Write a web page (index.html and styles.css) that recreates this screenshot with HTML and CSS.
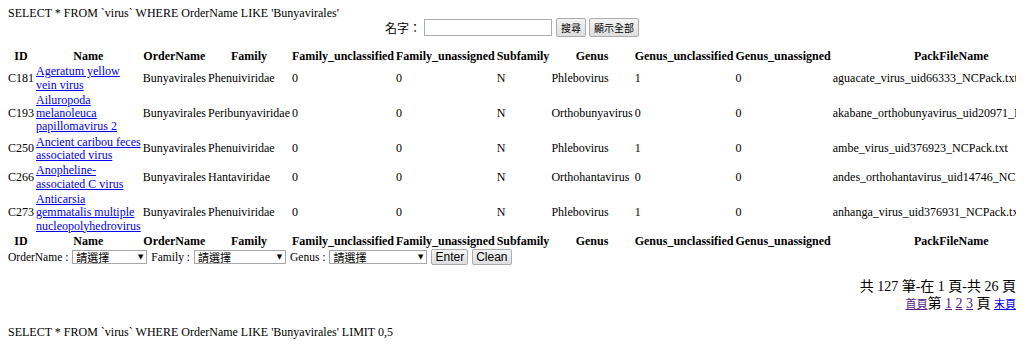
FILE: index.html
```html
<!DOCTYPE html>
<html lang="zh-Hant">
<head>
    <meta charset="UTF-8">
    <meta name="viewport" content="width=device-width, initial-scale=1.0">
    <title>virus</title>
    <link rel="stylesheet" href="styles.css">
</head>
<body>
    <div class="sql">SELECT * FROM `virus` WHERE OrderName LIKE 'Bunyavirales'</div>

    <form class="search">
        <label class="search-label">名字：</label>
        <input type="text" class="search-input">
        <button type="button" class="btn">搜尋</button>
        <button type="button" class="btn">顯示全部</button>
    </form>

    <table class="list">
        <thead>
            <tr>
                <th>ID</th><th>Name</th><th>OrderName</th><th>Family</th><th>Family_unclassified</th><th>Family_unassigned</th><th>Subfamily</th><th>Genus</th><th>Genus_unclassified</th><th>Genus_unassigned</th><th>PackFileName</th>
            </tr>
        </thead>
        <tbody>
            <tr>
                <td>C181</td><td><a href="#">Ageratum yellow vein virus</a></td><td>Bunyavirales</td><td>Phenuiviridae</td><td>0</td><td>0</td><td>N</td><td>Phlebovirus</td><td>1</td><td>0</td><td>aguacate_virus_uid66333_NCPack.txt</td>
            </tr>
            <tr>
                <td>C193</td><td><a href="#">Ailuropoda melanoleuca papillomavirus 2</a></td><td>Bunyavirales</td><td>Peribunyaviridae</td><td>0</td><td>0</td><td>N</td><td>Orthobunyavirus</td><td>0</td><td>0</td><td>akabane_orthobunyavirus_uid20971_NCPack.txt</td>
            </tr>
            <tr>
                <td>C250</td><td><a href="#">Ancient caribou feces associated virus</a></td><td>Bunyavirales</td><td>Phenuiviridae</td><td>0</td><td>0</td><td>N</td><td>Phlebovirus</td><td>1</td><td>0</td><td>ambe_virus_uid376923_NCPack.txt</td>
            </tr>
            <tr>
                <td>C266</td><td><a href="#">Anopheline-associated C virus</a></td><td>Bunyavirales</td><td>Hantaviridae</td><td>0</td><td>0</td><td>N</td><td>Orthohantavirus</td><td>0</td><td>0</td><td>andes_orthohantavirus_uid14746_NCPack.txt</td>
            </tr>
            <tr>
                <td>C273</td><td><a href="#">Anticarsia gemmatalis multiple nucleopolyhedrovirus</a></td><td>Bunyavirales</td><td>Phenuiviridae</td><td>0</td><td>0</td><td>N</td><td>Phlebovirus</td><td>1</td><td>0</td><td>anhanga_virus_uid376931_NCPack.txt</td>
            </tr>
        </tbody>
        <tfoot>
            <tr>
                <th>ID</th><th>Name</th><th>OrderName</th><th>Family</th><th>Family_unclassified</th><th>Family_unassigned</th><th>Subfamily</th><th>Genus</th><th>Genus_unclassified</th><th>Genus_unassigned</th><th>PackFileName</th>
            </tr>
        </tfoot>
    </table>

    <form class="filter">
        <label>OrderName :</label>
        <span class="pick pick-order"><select><option>請選擇</option></select></span>
        <label>Family :</label>
        <span class="pick pick-family"><select><option>請選擇</option></select></span>
        <label>Genus :</label>
        <span class="pick pick-genus"><select><option>請選擇</option></select></span>
        <button type="button" class="btn btn-en">Enter</button>
        <button type="button" class="btn btn-en">Clean</button>
    </form>

    <div class="pager">
        <div class="pager-count">共 127 筆-在 1 頁-共 26 頁</div>
        <div class="pager-links"><a href="#" class="small visited">首頁</a>第 <a href="#" class="visited">1</a> <a href="#" class="visited">2</a> <a href="#" class="visited">3</a> 頁 <a href="#" class="small">末頁</a></div>
    </div>

    <div class="sql sql-limit">SELECT * FROM `virus` WHERE OrderName LIKE 'Bunyavirales' LIMIT 0,5</div>
</body>
</html>
```

FILE: styles.css
```css
* {padding: 0; margin: 0; box-sizing: border-box;}
html {overflow-x: hidden;}
body {margin: 7px 8px 8px; font: 12px/13.3px "Liberation Serif", "Noto Sans CJK TC", serif; color: #000; background: #fff;}
a {color: #0000ee;}
a.visited {color: #551a8b;}

.sql {line-height: 12px;}
.sql-limit {margin-top: 14px; line-height: 13.3px;}

.search {display: flex; justify-content: center; align-items: center; gap: 3px; height: 19px; margin-top: -1px;}
.search-label {font: 12px "Noto Sans CJK TC", sans-serif;}
.search-input {width: 128px; height: 17px; border: 1px solid #abadb3; background: #fff; margin-right: 1px;}

.btn {font: 10px/1 "Noto Sans CJK TC", sans-serif; color: #000; height: 19px; padding: 0 4px; border: 1px solid #acacac; border-radius: 2px; background: linear-gradient(#f3f3f3, #dedede);}
.btn-en {font: 12px/1 "Liberation Sans", sans-serif; height: 16px; padding: 0 3px;}

.list {width: 100%; border-spacing: 0; margin-top: 12px;}
.list th, .list td {padding: 1px; vertical-align: middle;}
.list th:first-child, .list td:first-child {padding-left: 0;}
.list th {font-weight: bold; text-align: center;}
.list td {text-align: left;}

.filter {display: flex; align-items: center; gap: 4px; height: 16px; font-size: 11.5px;}
.pick {position: relative; display: inline-block; height: 14px;}
.pick select {appearance: none; -webkit-appearance: none; width: 100%; height: 14px; border: 1px solid #a6a6a6; background: #fff; font: 11px/12px "Noto Sans CJK TC", sans-serif; color: #000; padding: 0 3px; border-radius: 0;}
.pick::after {content: "\25BC"; position: absolute; right: 4px; top: 3px; font: 7px/8px "DejaVu Sans", sans-serif; color: #000; pointer-events: none;}
.pick-order {width: 75px;}
.pick-family {width: 92px;}
.pick-genus {width: 98px;}

.pager {margin-top: 14px; text-align: right;}
.pager-count {font: 14px/16px "Liberation Serif", "Noto Sans CJK TC", serif;}
.pager-links {font: 14px/16px "Liberation Serif", "Noto Sans CJK TC", serif;}
.pager-links .small {font: 11px "Noto Sans CJK TC", sans-serif;}
```
